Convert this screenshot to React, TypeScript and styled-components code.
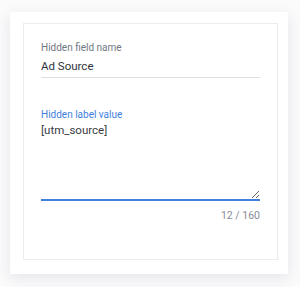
import React from 'react'
import styled, { createGlobalStyle } from 'styled-components'

const GlobalStyle = createGlobalStyle`
  html, body {
    margin: 0;
    padding: 0;
    background: #fbfbfc;
    font-family: Roboto, "Liberation Sans", Arial, sans-serif;
  }
`

const App: React.FC = () => {
  return (
    <Page>
      <GlobalStyle />
      <Card>
        <Panel>
          <Field>
            <Label>Hidden field name</Label>
            <TextInput defaultValue="Ad Source" />
          </Field>
          <Field $gap={31}>
            <Label $active>Hidden label value</Label>
            <TextArea defaultValue="[utm_source]" />
            <Counter>12 / 160</Counter>
          </Field>
        </Panel>
      </Card>
    </Page>
  )
}

const Page = styled.div`
  padding: 12px 12px 13px 10px;
`

const Card = styled.div`
  width: 278px;
  box-sizing: border-box;
  background: #fff;
  padding: 11px 10px 14px 13px;
  box-shadow: 0 4px 14px rgba(40, 44, 60, 0.11);
`

const Panel = styled.div`
  border: 1px solid #ececee;
  padding: 18px 17px 37px 17px;
`

const Field = styled.div<{ $gap?: number }>`
  display: flex;
  flex-direction: column;
  margin-top: ${(props) => props.$gap || 0}px;
`

const Label = styled.label<{ $active?: boolean }>`
  font-size: 10px;
  line-height: 12px;
  color: ${(props) => (props.$active ? '#3f80dc' : '#727782')};
`

const TextInput = styled.input`
  box-sizing: border-box;
  border: none;
  border-bottom: 1px solid #dedfe3;
  outline: none;
  padding: 0;
  margin: 0;
  height: 24px;
  font-family: inherit;
  font-size: 11.5px;
  color: #30333a;
  background: transparent;
`

const TextArea = styled.textarea`
  box-sizing: border-box;
  border: none;
  border-bottom: 2px solid #3f80dc;
  outline: none;
  padding: 1px 0 0 0;
  margin: 0;
  height: 80px;
  resize: vertical;
  font-family: inherit;
  font-size: 11.5px;
  line-height: 16px;
  color: #3a3d44;
  background: transparent;
`

const Counter = styled.div`
  margin-top: 9px;
  align-self: flex-end;
  font-size: 10.5px;
  line-height: 12px;
  color: #878c96;
`

export default App
